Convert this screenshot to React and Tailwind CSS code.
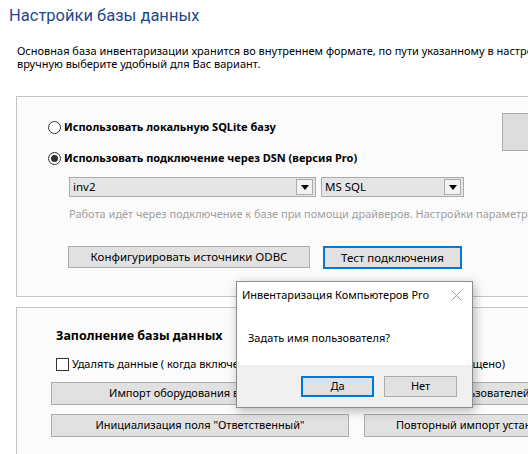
// Database settings page with a modal question on top
const font = "font-['Segoe_UI','Noto_Sans',sans-serif]";

function Radio({ checked, children }) {
  return (
    <div className="h-[16px] flex items-center gap-[3px]">
      <span className="w-[13px] h-[13px] rounded-full border border-[#333333] bg-white flex items-center justify-center shrink-0">
        {checked && <span className="w-[7px] h-[7px] rounded-full bg-[#333333]" />}
      </span>
      <span className="font-bold text-[11px] text-black whitespace-nowrap">{children}</span>
    </div>
  );
}

function Combo({ value, width }) {
  return (
    <div
      className={`h-[20px] border border-[#acacac] bg-[#e5e5e5] flex items-center justify-between pl-[3px] pr-[2px] ${width}`}
    >
      <span className="text-[11.5px] text-black leading-none">{value}</span>
      <span className="w-[17px] h-[16px] border border-[#acacac] bg-[#f3f3f3] flex items-center justify-center">
        <svg width="8" height="5" viewBox="0 0 8 5">
          <path d="M0 0h8L4 5z" fill="#000" />
        </svg>
      </span>
    </div>
  );
}

function Button({ children, focused, className = '' }) {
  return (
    <div
      className={`flex items-center justify-center bg-[#e1e1e1] text-black whitespace-nowrap overflow-hidden ${
        focused ? 'border-2 border-[#0078d7]' : 'border border-[#adadad]'
      } ${className}`}
    >
      {children}
    </div>
  );
}

export default function App() {
  return (
    <div className={`relative w-[528px] h-[454px] overflow-hidden bg-white ${font}`}>
      <h1 className="pl-[9px] pt-[4px] font-['Roboto',sans-serif] text-[16.5px] leading-[24px] font-normal text-[#1e4a8c] whitespace-nowrap">
        Настройки базы данных
      </h1>

      <p className="pl-[17px] mt-[16px] text-[11px] leading-[13px] text-black whitespace-nowrap">
        Основная база инвентаризации хранится во внутреннем формате, по пути указанному в настройках программы. Если это не устраивает,
        <br />
        вручную выберите удобный для Вас вариант.
      </p>

      {/* DSN / SQLite panel */}
      <div className="ml-[16px] mt-[26px] w-[600px] h-[201px] border border-[#c4c4c4] bg-[#fbfbfb] flex">
        <div className="w-[485px] shrink-0 pl-[31px] pt-[22px] flex flex-col">
          <Radio>Использовать локальную SQLite базу</Radio>
          <div className="mt-[15px]">
            <Radio checked>Использовать подключение через DSN (версия Pro)</Radio>
          </div>
          <div className="mt-[11px] ml-[21px] flex gap-[5px]">
            <Combo value="inv2" width="w-[247px]" />
            <Combo value="MS SQL" width="w-[143px]" />
          </div>
          <p className="mt-[9px] ml-[21px] h-[16px] flex items-center text-[11px] text-[#a0a0a0] whitespace-nowrap">
            Работа идёт через подключение к базе при помощи драйверов. Настройки параметров
          </p>
          <div className="mt-[24px] ml-[20px] flex gap-[13px]">
            <Button className="w-[242px] h-[22px] text-[11.5px]">Конфигурировать источники ODBC</Button>
            <Button focused className="w-[139px] h-[23px] text-[11.5px]">Тест подключения</Button>
          </div>
        </div>
        <div className="pt-[16px]">
          <div className="w-[60px] h-[38px] border border-[#adadad] bg-[#dddddd]" />
        </div>
      </div>

      {/* Fill database panel */}
      <div className="ml-[16px] mt-[10px] w-[600px] h-[200px] border border-[#c4c4c4] bg-[#fbfbfb] pt-[18px]">
        <h2 className="pl-[39px] text-[12.5px] font-bold leading-[20px] text-black whitespace-nowrap">
          Заполнение базы данных
        </h2>
        <div className="mt-[10px] pl-[39px] flex items-center gap-[3px]">
          <span className="w-[13px] h-[13px] border border-[#333333] bg-white shrink-0" />
          <span className="text-[11px] text-black whitespace-nowrap">
            Удалять данные ( когда включено, перед импортом содержимое будет очищено)
          </span>
        </div>
        <div className="mt-[9px] pl-[34px] grid grid-cols-[298px_298px] gap-x-[15px] gap-y-[9px] text-[11px]">
          <Button className="h-[23px]">Импорт оборудования в базу (INI)</Button>
          <Button className="h-[23px] justify-start pl-[40px]">Импорт пользователей</Button>
          <Button className="h-[23px]">Инициализация поля "Ответственный"</Button>
          <Button className="h-[23px] justify-start pl-[31px]">Повторный импорт установленного ПО</Button>
        </div>
      </div>

      {/* Message box */}
      <div className="absolute left-[236px] top-[281px] w-[237px] h-[127px] bg-white border border-[#8c8c8c] shadow-[2px_3px_10px_rgba(0,0,0,0.28)] flex flex-col">
        <div className="h-[27px] flex items-center justify-between pl-[5px] pr-[10px]">
          <span className="text-[11px] text-black whitespace-nowrap">Инвентаризация Компьютеров Pro</span>
          <svg width="11" height="11" viewBox="0 0 11 11">
            <path d="M0.5 0.5L10.5 10.5M10.5 0.5L0.5 10.5" stroke="#a0a0a0" strokeWidth="1" />
          </svg>
        </div>
        <div className="flex-1 pl-[11px] pt-[21px] text-[11px] text-black whitespace-nowrap">Задать имя пользователя?</div>
        <div className="h-[42px] bg-[#f0f0f0] flex items-center justify-end gap-[10px] pr-[15px] text-[11px]">
          <Button focused className="w-[73px] h-[21px]">Да</Button>
          <Button className="w-[73px] h-[21px]">Нет</Button>
        </div>
      </div>
    </div>
  );
}
